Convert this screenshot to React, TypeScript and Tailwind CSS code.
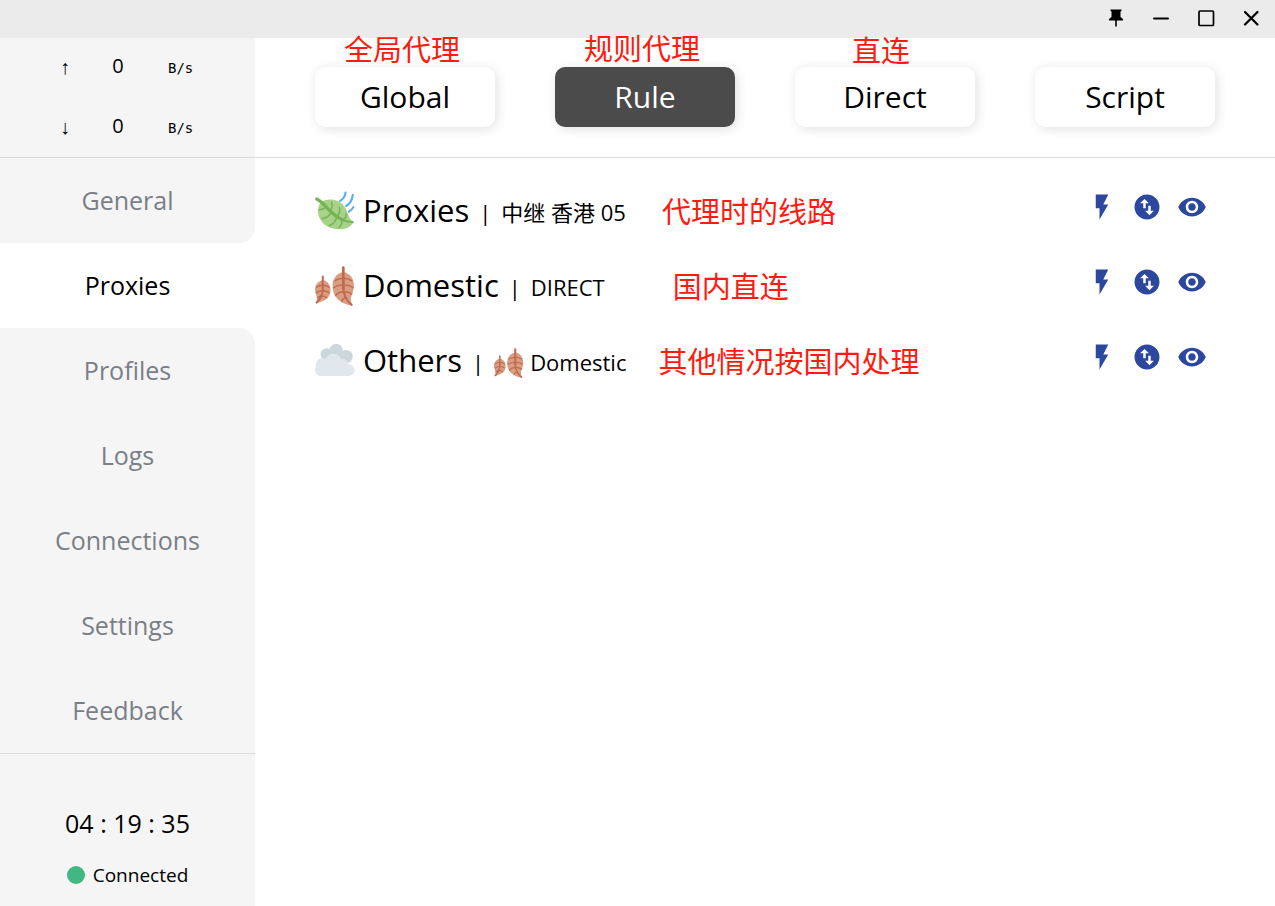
import { useState, type ReactNode } from 'react'
import { MdFlashOn, MdRemoveRedEye, MdSwapVerticalCircle } from 'react-icons/md'

const MODES = [
  { name: 'Global', note: '全局代理', noteClass: 'left-[29px] -top-8' },
  { name: 'Rule', note: '规则代理', noteClass: 'left-[29px] -top-[33px]' },
  { name: 'Direct', note: '直连', noteClass: 'left-[57px] -top-[31px]' },
  { name: 'Script', note: '', noteClass: '' },
]

const PAGES = ['General', 'Proxies', 'Profiles', 'Logs', 'Connections', 'Settings', 'Feedback']

function WindLeaf({ className }: { className: string }) {
  return (
    <svg className={className} viewBox="0 0 36 36" fill="none" aria-hidden="true">
      <path
        fill="#A6D388"
        d="M5 10.500C9 7 15.500 6.800 20.500 9C26 11.500 28 16 29.500 20.500C30.800 24.500 32.500 26.500 34.800 28C32.500 32.500 27.500 34.800 21 34.500C11 34.200 4.500 28.500 3 21C2.300 17 3 13 5 10.500Z"
      />
      <g stroke="#77B255" strokeWidth="1.300" strokeLinecap="round">
        <path strokeWidth="2.800" d="M1.600 7.200C6 9.500 9 13 13 17.500C17 21.500 21 24.500 25 26" />
        <path strokeWidth="1.800" d="M24 25.800C28 27.600 31 28 34 28" />
        <path d="M13.500 18C15.500 16 15.800 13 14.800 10" />
        <path d="M19.500 22.800C22 21 22.800 17.500 21.800 14.500" />
        <path d="M25.500 26C27.500 24.500 28.200 22.500 28 20.500" />
        <path d="M10 14.500C8 16.200 6 16.800 4 16.800" />
        <path d="M14.500 19C13 22.500 10 24.500 6.500 24.800" />
        <path d="M19.500 23C19 27 16.500 29.800 13 31" />
        <path d="M24 26C24.500 29 23.500 31.500 21.500 33" />
      </g>
      <g stroke="#5DADEC" strokeWidth="1.900" strokeLinecap="round">
        <path d="M27.500 1.500C27 5 25 7.500 22.500 9" />
        <path d="M34 3.500C33.500 8 31.500 11.500 28 13.500" />
        <path d="M34.500 14.500C33.500 16.500 32.300 17.700 30.500 18.700" />
      </g>
    </svg>
  )
}

function FallenLeaves({ className }: { className: string }) {
  return (
    <svg className={className} viewBox="0 0 36 36" fill="none" aria-hidden="true">
      <path
        fill="#D99E82"
        d="M25.500 5.500C31.500 6.500 35.500 11.500 35 18.500C34.500 23.500 33 26.500 32.300 29C32 31.500 32.700 33.500 33.500 35.300C29.500 35.500 26 34 22.500 31.500C17.500 28 15.500 23 15.800 16.500C16.500 10.500 20 6.500 25.500 5.500Z"
      />
      <path
        fill="#D99E82"
        d="M7 12.500C11.500 13.500 14 17 14 21.500C14 26.500 11.500 29.500 7 31.500C5 32.500 3 33 1 33.500C1.500 31.500 2 29.500 1.500 27.500C.5 25 0 23 0 20.500C.3 16.500 3 13.500 7 12.500Z"
      />
      <g stroke="#C1694F" strokeWidth="1.300" strokeLinecap="round">
        <path strokeWidth="2.400" d="M25.500 1.500V20" />
        <path strokeWidth="1.800" d="M25.500 19C25.500 25 28 31 33 35" />
        <path d="M18 13.200C20 11.800 22 11 25.500 11C29 11 31 11.800 33 13.200" />
        <path d="M17 19.500C19 17.800 21.500 17 25.500 17C29.500 17 32 17.800 34 19.500" />
        <path d="M18.500 26.500C20 24.500 22.500 23.200 26 23.200C29 23.200 31.500 24 33 25.500" />
        <path d="M24 32C24.500 30.500 25.500 29 27.500 28.500" />
        <path strokeWidth="1.800" d="M7 9.500V21C7 26 4.500 30 1.500 33" />
        <path d="M1.500 19C3 17.800 4.500 17.400 7 17.400C9.500 17.400 11 17.800 12.500 19" />
        <path d="M1.500 24C3 22.700 4.500 22.200 7 22.200C9.500 22.200 11 22.700 12.500 24" />
        <path d="M2.500 28.500C3.500 27.500 4.500 27 6 27C8 27 9.500 27.500 10.500 28.500" />
      </g>
    </svg>
  )
}

function Cloud({ className }: { className: string }) {
  return (
    <svg className={className} viewBox="0 0 36 36" aria-hidden="true">
      <g fill="#CCD6DD">
        <circle cx="10.500" cy="12" r="5.500" />
        <circle cx="19" cy="8.500" r="6" />
        <circle cx="28" cy="14" r="6" />
        <path d="M9 9H27V21H9Z" />
      </g>
      <g fill="#E1E8ED">
        <circle cx="6.500" cy="21.500" r="6" />
        <circle cx="16.500" cy="19" r="7.500" />
        <circle cx="25" cy="21" r="5" />
        <rect x="0" y="21" width="35.500" height="10.500" rx="5.200" />
      </g>
    </svg>
  )
}

type Group = {
  name: string
  icon: ReactNode
  current: string
  currentIcon?: ReactNode
  note: string
  noteClass: string
}

const GROUPS: Group[] = [
  {
    name: 'Proxies',
    icon: <WindLeaf className="size-10" />,
    current: '中继 香港 05',
    note: '代理时的线路',
    noteClass: 'ml-9',
  },
  {
    name: 'Domestic',
    icon: <FallenLeaves className="size-10" />,
    current: 'DIRECT',
    note: '国内直连',
    noteClass: 'ml-[68px]',
  },
  {
    name: 'Others',
    icon: <Cloud className="size-10" />,
    current: 'Domestic',
    currentIcon: <FallenLeaves className="size-[30px]" />,
    note: '其他情况按国内处理',
    noteClass: 'ml-8',
  },
]

function TitleBar() {
  return (
    <header className="flex h-[38px] items-center justify-end bg-[#ebebeb] pr-0.5 pb-0.5">
      <button className="flex w-[45px] justify-center" aria-label="Pin">
        <svg className="size-5" viewBox="0 0 20 20">
          <path d="M4.500 1.500h11v1.500l-1 .5v5.500l2.500 2v1.400h-6.200v5.600l-.8 1-.8-1v-5.600H3V11L5.500 9V3.500l-1-.5z" />
        </svg>
      </button>
      <button className="flex w-[45px] justify-center" aria-label="Minimize">
        <svg className="size-5" viewBox="0 0 20 20" stroke="#000" strokeWidth="2" strokeLinecap="round">
          <path d="M3 10.500h14" />
        </svg>
      </button>
      <button className="flex w-[45px] justify-center" aria-label="Maximize">
        <svg className="size-5" viewBox="0 0 20 20" fill="none" stroke="#000" strokeWidth="1.700">
          <rect x="3" y="3" width="14.500" height="14.500" rx="1" />
        </svg>
      </button>
      <button className="flex w-[45px] justify-center" aria-label="Close">
        <svg className="size-5" viewBox="0 0 20 20" stroke="#000" strokeWidth="2.200" strokeLinecap="round">
          <path d="M4 4l12.500 12.500M16.500 4L4 16.500" />
        </svg>
      </button>
    </header>
  )
}

function Speed({ arrow }: { arrow: string }) {
  return (
    <div className="flex h-[60px] items-center">
      <span className="w-[130px] pb-0.5 text-center font-['Liberation_Sans'] text-xl">{arrow}</span>
      <span className="-ml-6 w-6 pb-1 text-center text-xl">0</span>
      <span className="ml-[38px] font-['DejaVu_Sans_Mono'] text-sm">B/s</span>
    </div>
  )
}

function Sidebar() {
  const [page, setPage] = useState('Proxies')
  const active = PAGES.indexOf(page)

  return (
    <aside className="flex w-1/5 flex-col">
      <div className="h-[120px] border-b border-[#dcdcdc] bg-[#f5f5f5]">
        <Speed arrow="↑" />
        <Speed arrow="↓" />
      </div>
      <nav className="flex flex-col">
        {PAGES.map((name, i) => {
          let look = 'bg-[#f5f5f5] text-[#7a7f87]'
          if (i === active) look = 'bg-white text-black'
          if (i === active - 1) look += ' rounded-br-2xl'
          if (i === active + 1) look += ' rounded-tr-2xl'
          return (
            <button key={name} onClick={() => setPage(name)} className={`h-[85px] text-[25px] ${look}`}>
              {name}
            </button>
          )
        })}
      </nav>
      <div className="flex flex-1 flex-col items-center border-t border-[#dcdcdc] bg-[#f5f5f5] pt-[53px]">
        <div className="text-[25px] leading-8">04 : 19 : 35</div>
        <div className="mt-5 flex items-center gap-2 text-[19px] leading-8">
          <span className="size-[18px] rounded-full bg-[#41b883]" />
          Connected
        </div>
      </div>
    </aside>
  )
}

function GroupRow({ group }: { group: Group }) {
  return (
    <li className="flex h-[75px] items-center">
      {group.icon}
      <span className="ml-2 text-[31px]">{group.name}</span>
      <span className="ml-2.5 pt-1 text-[22px]">|</span>
      <span className="ml-2.5 flex items-center gap-1.5 pt-1 text-[22px]">
        {group.currentIcon}
        {group.current}
      </span>
      <span className={`pt-0.5 text-[29px] text-[#ff1b0f] ${group.noteClass}`}>{group.note}</span>
      <div className="mr-2 mb-2 ml-auto flex gap-[15px] text-[30px] text-[#2c479e]">
        <button aria-label={`Test ${group.name}`}>
          <MdFlashOn />
        </button>
        <button aria-label={`Sort ${group.name}`}>
          <MdSwapVerticalCircle />
        </button>
        <button aria-label={`Show ${group.name}`}>
          <MdRemoveRedEye />
        </button>
      </div>
    </li>
  )
}

export default function App() {
  const [mode, setMode] = useState('Rule')

  return (
    <div className="flex min-h-screen flex-col bg-white font-['Open_Sans','Noto_Sans_CJK_SC',sans-serif] text-black">
      <TitleBar />
      <div className="flex flex-1">
        <Sidebar />
        <main className="flex-1">
          <div className="grid h-[120px] grid-cols-4 items-center gap-[60px] border-b border-[#dcdcdc] px-[60px] pb-0.5">
            {MODES.map((m) => (
              <div key={m.name} className="relative">
                <button
                  onClick={() => setMode(m.name)}
                  className={`h-[60px] w-full rounded-[10px] text-3xl shadow-[2px_2px_12px_rgba(0,0,0,0.12)] ${
                    m.name === mode ? 'bg-[#4b4b4b] text-white' : 'bg-white'
                  }`}
                >
                  {m.name}
                </button>
                {m.note && (
                  <span className={`absolute text-[29px] leading-[29px] whitespace-nowrap text-[#ff1b0f] ${m.noteClass}`}>
                    {m.note}
                  </span>
                )}
              </div>
            ))}
          </div>
          <ul className="px-[60px] pt-[15px]">
            {GROUPS.map((group) => (
              <GroupRow key={group.name} group={group} />
            ))}
          </ul>
        </main>
      </div>
    </div>
  )
}
